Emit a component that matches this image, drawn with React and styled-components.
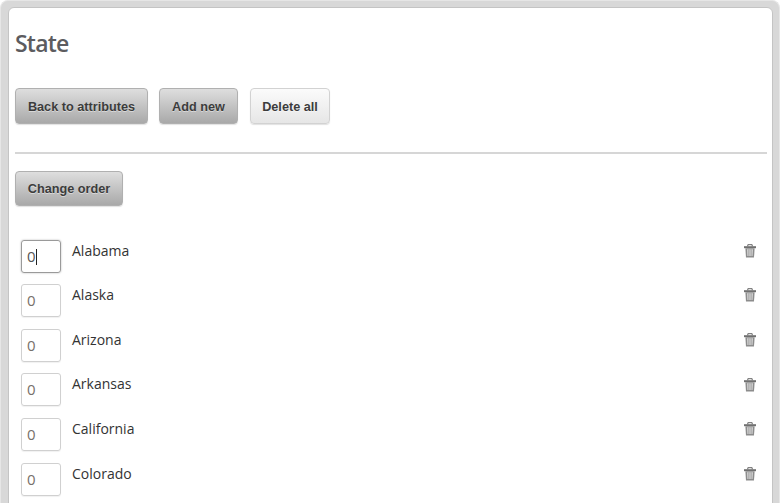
import React from "react";
import styled, { createGlobalStyle } from "styled-components";

const Global = createGlobalStyle`
  html, body { margin: 0; padding: 0; background: #fff; overflow: hidden; height: 503px; }
  #root { height: 503px; }
`;

const Frame = styled.div`
  box-sizing: border-box;
  width: 780px;
  height: 503px;
  overflow: hidden;
  background: #d8d8d8;
  border: 1px solid #e6e6e6;
  border-bottom: 0;
  border-radius: 8px 8px 0 0;
  padding: 6px 6px 0 7px;
`;

const Panel = styled.main`
  box-sizing: border-box;
  height: 510px;
  background: #fff;
  border: 1px solid #c4c4c4;
  border-radius: 6px 6px 0 0;
  padding: 0 5px 0 6px;
  font-family: "Liberation Sans", Arial, sans-serif;
`;

const Title = styled.h1`
  margin: 0;
  padding-top: 21px;
  height: 58px;
  box-sizing: border-box;
  font-family: "Open Sans", "DejaVu Sans", sans-serif;
  font-size: 23px;
  line-height: 28px;
  font-weight: 600;
  letter-spacing: -0.8px;
  color: #5c5c60;
`;

const Toolbar = styled.div`
  display: flex;
  gap: 11px;
  height: 66px;
  box-sizing: border-box;
  border-bottom: 2px solid #d6d6d6;
  margin-top: 22px;
`;

const Button = styled.button`
  box-sizing: border-box;
  height: ${(p) => p.$h || 36}px;
  width: ${(p) => p.$w}px;
  margin-left: ${(p) => p.$push || 0}px;
  padding: 1px 0 0;
  border: 1px solid ${(p) => (p.$light ? "#d2d2d2" : "#b0b0b0")};
  border-radius: 4px;
  background: ${(p) =>
    p.$light
      ? "linear-gradient(#fbfbfb, #e6e6e6)"
      : "linear-gradient(#dedede, #a9a9a9)"};
  box-shadow: 0 1px 1px rgba(0, 0, 0, 0.12);
  font-family: "Liberation Sans", Arial, sans-serif;
  font-size: 12.7px;
  font-weight: 700;
  color: #3c3c3c;
  text-shadow: 0 1px 0 rgba(255, 255, 255, 0.45);
`;

const OrderBar = styled.div`
  display: flex;
  margin-top: 17px;
  margin-bottom: 33.6px;
`;

const List = styled.ul`
  list-style: none;
  margin: 0;
  padding: 0 11.5px 0 6px;
`;

const Row = styled.li`
  display: flex;
  align-items: flex-start;
  height: 44.6px;
`;

const NumberBox = styled.div`
  box-sizing: border-box;
  width: 40px;
  height: 33px;
  padding-left: 5px;
  border: 1px solid ${(p) => (p.$focus ? "#9a9a9a" : "#d0d0d0")};
  border-radius: 3px;
  box-shadow: ${(p) => (p.$focus ? "0 0 2px rgba(0,0,0,.3)" : "0 1px 1px rgba(0,0,0,.06)")};
  font-family: "Open Sans", sans-serif;
  font-size: 15px;
  line-height: 30px;
  color: ${(p) => (p.$focus ? "#555" : "#77706a")};
`;

const Caret = styled.span`
  display: inline-block;
  width: 1px;
  height: 16px;
  background: #222;
  vertical-align: -3px;
`;

const Name = styled.span`
  flex: 1;
  margin-left: 11px;
  padding-top: 1px;
  font-family: "Open Sans", sans-serif;
  font-size: 14px;
  line-height: 20px;
  font-weight: 500;
  color: #333;
`;

const TrashButton = styled.span`
  display: flex;
  margin-top: 4.3px;
`;

const Trash = () => (
  <TrashButton>
    <svg width="12" height="14" viewBox="0 0 12 14">
      <path d="M3.8 2.4V.7h4.4v1.7" fill="none" stroke="#666" strokeWidth="1" />
      <rect x="0" y="2.2" width="12" height="2" fill="#707070" />
      <path d="M1.4 4.2h9.2l-.6 9.4H2z" fill="#8c8c8c" />
      <path d="M3 5.2h6l-.4 6.8H3.4z" fill="#d4d4d4" />
      <path d="M4.6 5.2v6.8M6 5.2v6.8M7.4 5.2v6.8" stroke="#a0a0a0" strokeWidth=".7" />
    </svg>
  </TrashButton>
);

const states = ["Alabama", "Alaska", "Arizona", "Arkansas", "California", "Colorado"];

export default function App() {
  return (
    <>
      <Global />
      <Frame>
        <Panel>
          <Title>State</Title>
          <Toolbar>
            <Button $w={133}>Back to attributes</Button>
            <Button $w={79}>Add new</Button>
            <Button $w={80} $push={1} $light>Delete all</Button>
          </Toolbar>
          <OrderBar>
            <Button $w={108} $h={35}>Change order</Button>
          </OrderBar>
          <List>
            {states.map((s, i) => (
              <Row key={s}>
                <NumberBox $focus={i === 0}>0{i === 0 && <Caret />}</NumberBox>
                <Name>{s}</Name>
                <Trash />
              </Row>
            ))}
          </List>
        </Panel>
      </Frame>
    </>
  );
}
